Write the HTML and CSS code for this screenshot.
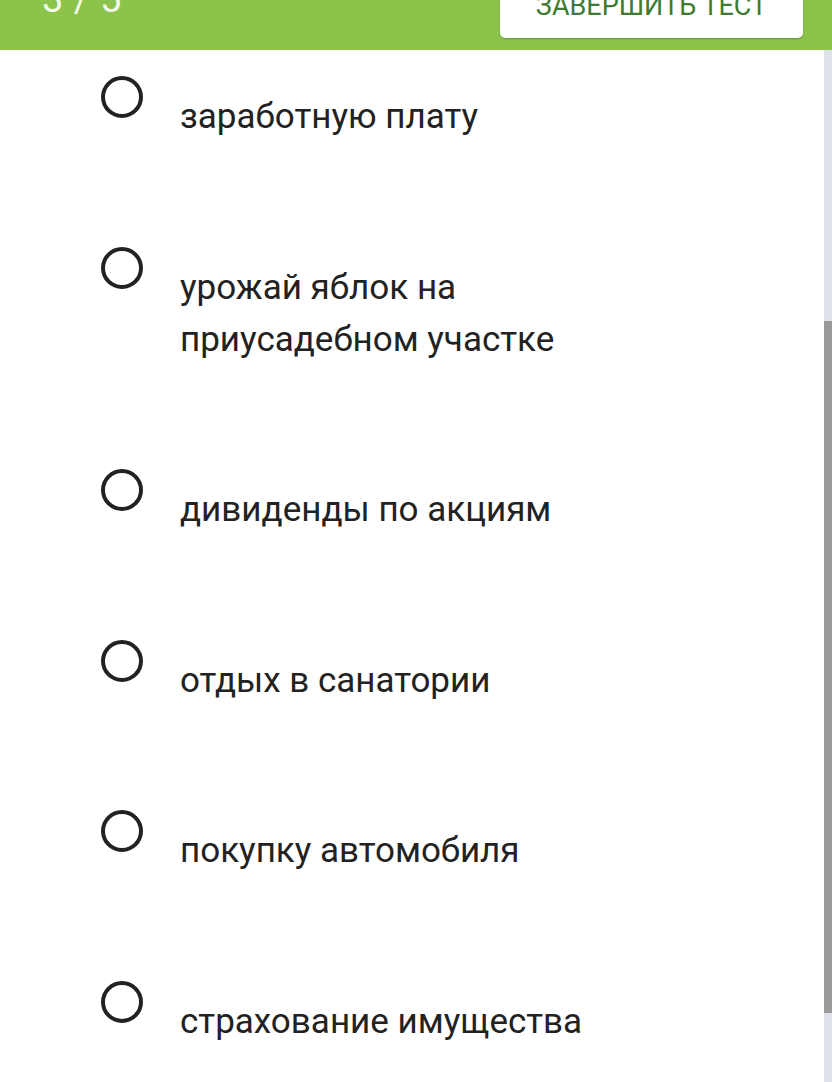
FILE: index.html
```html
<!DOCTYPE html>
<html lang="ru">
<head>
<meta charset="utf-8">
<title>Тест</title>
<link rel="stylesheet" href="styles.css">
</head>
<body>
<header class="topbar">
  <div class="counter">3 / 5</div>
  <button class="finish">ЗАВЕРШИТЬ ТЕСТ</button>
</header>
<main class="options">
  <label class="option"><span class="radio"></span><span class="label">заработную плату</span></label>
  <label class="option"><span class="radio"></span><span class="label">урожай яблок на<br>приусадебном участке</span></label>
  <label class="option"><span class="radio"></span><span class="label">дивиденды по акциям</span></label>
  <label class="option"><span class="radio"></span><span class="label">отдых в санатории</span></label>
  <label class="option"><span class="radio"></span><span class="label">покупку автомобиля</span></label>
  <label class="option"><span class="radio"></span><span class="label">страхование имущества</span></label>
</main>
<div class="scrollbar"><div class="thumb"></div></div>
</body>
</html>
```
FILE: styles.css
```css
html, body {
  margin: 0;
  padding: 0;
  height: 1082px;
  overflow: hidden;
  background: #ffffff;
  font-family: Roboto, "Noto Sans", sans-serif;
}

.topbar {
  height: 50px;
  background: #8cc34b;
  display: flex;
  justify-content: space-between;
  align-items: flex-end;
  padding: 0 29px 12px 42px;
  box-sizing: border-box;
  overflow: hidden;
}

.counter {
  color: #f3f9e9;
  font-size: 38px;
  line-height: 1;
  margin-bottom: 20px;
  letter-spacing: 0.5px;
}

.finish {
  width: 303px;
  height: 64px;
  background: #ffffff;
  border: none;
  border-radius: 5px;
  box-shadow: 0 1px 2px rgba(0,0,0,0.25);
  color: #3e7a2f;
  font-family: Roboto, "Noto Sans", sans-serif;
  font-size: 27px;
  padding: 0;
  flex-shrink: 0;
}

.options {
  display: flex;
  flex-direction: column;
  gap: 103.5px;
  padding: 26px 0 0 101px;
}

.option {
  display: flex;
  align-items: flex-start;
  gap: 37px;
}

.radio {
  width: 42px;
  height: 42px;
  box-sizing: border-box;
  border: 4px solid #222222;
  border-radius: 50%;
  flex-shrink: 0;
}

.label {
  padding-top: 15px;
  font-size: 35px;
  line-height: 52px;
  color: #222222;
}

.scrollbar {
  position: fixed;
  right: 0;
  top: 50px;
  bottom: 0;
  width: 8px;
  background: #dfe1e8;
}

.thumb {
  position: absolute;
  left: 0;
  right: 0;
  top: 271px;
  height: 692px;
  background: #9a9a9a;
}
```
